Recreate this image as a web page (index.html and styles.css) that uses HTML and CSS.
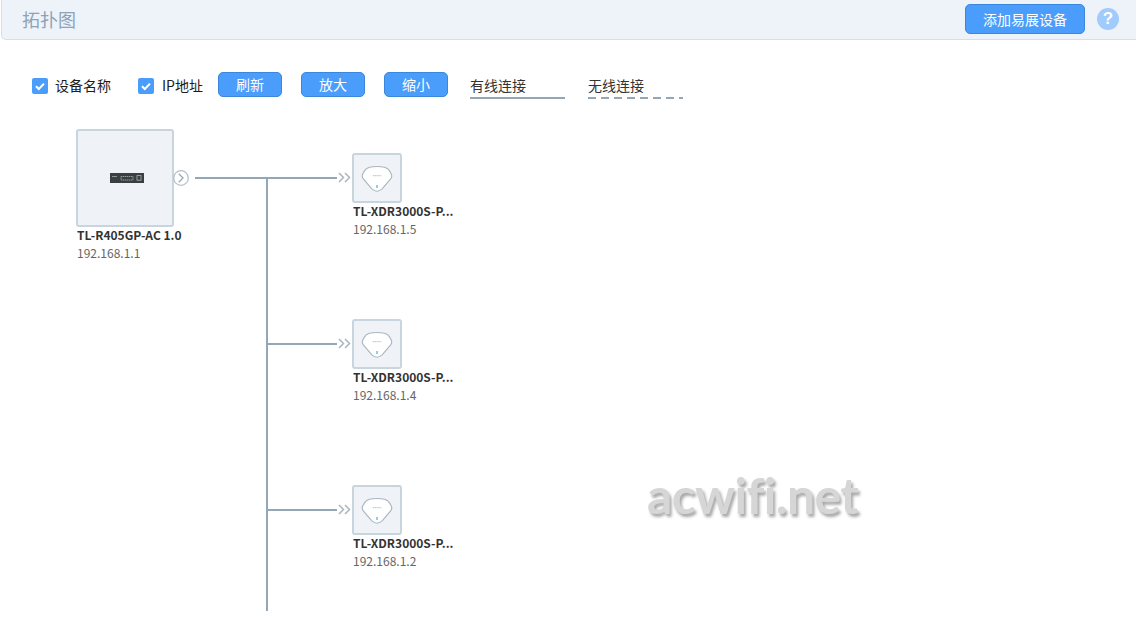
FILE: index.html
```html
<!DOCTYPE html>
<html lang="zh-CN">
<head>
<meta charset="utf-8">
<title>拓扑图</title>
<link rel="stylesheet" href="styles.css">
</head>
<body>
<header class="header">
  <h1 class="title">拓扑图</h1>
  <div class="header-actions">
    <button class="btn btn-add">添加易展设备</button>
    <span class="help">?</span>
  </div>
</header>
<div class="toolbar">
  <label class="check check-name"><span class="box"><svg viewBox="0 0 16 16" class="tick"><path d="M4 8.2l2.8 2.8L12 5.6" fill="none" stroke="#fff" stroke-width="2"/></svg></span>设备名称</label>
  <label class="check check-ip"><span class="box"><svg viewBox="0 0 16 16" class="tick"><path d="M4 8.2l2.8 2.8L12 5.6" fill="none" stroke="#fff" stroke-width="2"/></svg></span>IP地址</label>
  <button class="btn btn-tool">刷新</button>
  <button class="btn btn-tool">放大</button>
  <button class="btn btn-tool">缩小</button>
  <span class="legend legend-wired">有线连接</span>
  <span class="legend legend-wireless">无线连接</span>
</div>
<main class="topology">
  <div class="root">
    <div class="thumb thumb-root">
      <svg class="switch" viewBox="0 0 34 10">
        <rect width="34" height="10" fill="#3a4042"/>
        <rect x="2" y="3" width="5" height="1" fill="#8b9396"/>
        <path d="M11 3.500h12v3.500H11z" fill="none" stroke="#aeb5b8" stroke-width=".8" stroke-dasharray="1.400 .6"/>
        <rect x="27" y="2.600" width="4" height="4.600" fill="none" stroke="#aeb5b8" stroke-width=".8"/>
      </svg>
    </div>
    <div class="name">TL-R405GP-AC 1.0</div>
    <div class="ip">192.168.1.1</div>
  </div>
  <svg class="toggle" viewBox="0 0 16 16"><circle cx="8" cy="8" r="7.300" fill="#fff" stroke="#b4c1cc" stroke-width="1.300"/><path d="M5.800 3.800L10 8l-4.200 4.200" fill="none" stroke="#9aa8b4" stroke-width="1.300"/></svg>
  <div class="stub"></div>
  <div class="trunk"></div>
  <div class="branches">
    <div class="branch">
      <div class="wire"></div>
      <svg class="chev" viewBox="0 0 13 11"><path d="M1 1l4.500 4.500L1 10M7 1l4.500 4.500L7 10" fill="none" stroke="#a9b6c1" stroke-width="1.500"/></svg>
      <div class="node">
        <div class="thumb thumb-ap">
          <svg class="ap" viewBox="0 0 34 28"><path d="M9 2Q17 .5 25 2Q29 3 31 7L32.500 10Q33.200 12 31.500 14.500L22.500 25Q19.500 27.500 17 27.500Q14.500 27.500 11.500 25L2.500 14.500Q.8 12 1.500 10L3 7Q5 3 9 2Z" fill="#fff" stroke="#aab5be" stroke-width="1.200"/><path d="M12.500 11h9" stroke="#a4acb3" stroke-width=".8" stroke-dasharray="1.500 .5"/><path d="M17 21v3" stroke="#7fd0f5" stroke-width="2"/></svg>
        </div>
        <div class="name name-ap">TL-XDR3000S-P...</div>
        <div class="ip">192.168.1.5</div>
      </div>
    </div>
    <div class="branch">
      <div class="wire"></div>
      <svg class="chev" viewBox="0 0 13 11"><path d="M1 1l4.500 4.500L1 10M7 1l4.500 4.500L7 10" fill="none" stroke="#a9b6c1" stroke-width="1.500"/></svg>
      <div class="node">
        <div class="thumb thumb-ap">
          <svg class="ap" viewBox="0 0 34 28"><path d="M9 2Q17 .5 25 2Q29 3 31 7L32.500 10Q33.200 12 31.500 14.500L22.500 25Q19.500 27.500 17 27.500Q14.500 27.500 11.500 25L2.500 14.500Q.8 12 1.500 10L3 7Q5 3 9 2Z" fill="#fff" stroke="#aab5be" stroke-width="1.200"/><path d="M12.500 11h9" stroke="#a4acb3" stroke-width=".8" stroke-dasharray="1.500 .5"/><path d="M17 21v3" stroke="#7fd0f5" stroke-width="2"/></svg>
        </div>
        <div class="name name-ap">TL-XDR3000S-P...</div>
        <div class="ip">192.168.1.4</div>
      </div>
    </div>
    <div class="branch">
      <div class="wire"></div>
      <svg class="chev" viewBox="0 0 13 11"><path d="M1 1l4.500 4.500L1 10M7 1l4.500 4.500L7 10" fill="none" stroke="#a9b6c1" stroke-width="1.500"/></svg>
      <div class="node">
        <div class="thumb thumb-ap">
          <svg class="ap" viewBox="0 0 34 28"><path d="M9 2Q17 .5 25 2Q29 3 31 7L32.500 10Q33.200 12 31.500 14.500L22.500 25Q19.500 27.500 17 27.500Q14.500 27.500 11.500 25L2.500 14.500Q.8 12 1.500 10L3 7Q5 3 9 2Z" fill="#fff" stroke="#aab5be" stroke-width="1.200"/><path d="M12.500 11h9" stroke="#a4acb3" stroke-width=".8" stroke-dasharray="1.500 .5"/><path d="M17 21v3" stroke="#7fd0f5" stroke-width="2"/></svg>
        </div>
        <div class="name name-ap">TL-XDR3000S-P...</div>
        <div class="ip">192.168.1.2</div>
      </div>
    </div>
  </div>
</main>
<div class="watermark">acwifi.net</div>
</body>
</html>
```
FILE: styles.css
```css
* { box-sizing: border-box; }
html, body { margin: 0; height: 628px; overflow: hidden; background: #fff; }
body {
  position: relative;
  font-family: "Noto Sans CJK SC", "Noto Sans", sans-serif;
  color: #222;
}
.header {
  height: 40px;
  margin-left: 1px;
  padding: 4px 17px 0 20px;
  display: flex;
  justify-content: space-between;
  align-items: flex-start;
  background: #eef3fa;
  border-left: 1px solid #d6dfe9;
  border-bottom: 1px solid #d6dfe9;
  border-bottom-left-radius: 5px;
}
.title {
  margin: 0;
  font-size: 18px;
  font-weight: 400;
  line-height: 30px;
  color: #8fa2b6;
}
.header-actions { display: flex; align-items: center; gap: 12px; }
.btn {
  padding: 0;
  font-family: inherit;
  font-size: 14px;
  color: #fff;
  background: #4a9dfb;
  border: 1px solid #3b87dc;
  border-radius: 5px;
}
.btn-add { width: 120px; height: 30px; line-height: 26px; }
.help {
  width: 22px;
  height: 22px;
  margin-top: -1px;
  border-radius: 50%;
  background: #a0cbfc;
  color: #fff;
  font: 700 17px/22px "Liberation Sans", sans-serif;
  text-align: center;
}
.toolbar {
  height: 27px;
  margin-top: 32px;
  padding-left: 32px;
  display: flex;
  align-items: flex-start;
  font-size: 14px;
}
.check {
  display: flex;
  align-items: center;
  height: 26px;
  color: #1c1c1c;
}
.check-name { width: 106px; }
.check-ip { width: 80px; }
.box {
  width: 16px;
  height: 18px;
  margin-right: 7px;
  padding-top: 2px;
}
.check-ip .box { margin-right: 8px; }
.tick { display: block; width: 16px; height: 16px; border-radius: 2px; background: #4a9dfb; }
.btn-tool { width: 64px; height: 25px; margin-right: 19px; line-height: 21px; }
.btn-tool:nth-of-type(3) { margin-right: 22px; }
.legend {
  width: 95px;
  height: 27px;
  line-height: 27px;
  color: #333;
  font-size: 14px;
}
.legend-wired { border-bottom: 2px solid #94a7b6; margin-right: 23px; }
.legend-wireless {
  background: repeating-linear-gradient(to right, #94a7b6 0 8px, transparent 8px 13px) left bottom / 100% 2px no-repeat;
}
.topology { position: relative; height: 530px; margin-top: -1px; }
.root { position: absolute; left: 76px; top: 31px; }
.thumb {
  background: #eff3f7;
  border: 2px solid #c8d4de;
  border-radius: 3px;
  display: flex;
  align-items: center;
  justify-content: center;
}
.thumb-root { width: 98px; height: 98px; margin-bottom: -1px; }
.switch { width: 34px; height: 10px; display: block; margin-left: 3px; }
.name {
  padding-left: 1px;
  font-size: 12px;
  font-weight: 700;
  line-height: 18px;
  color: #333;
  white-space: nowrap;
}
.ip {
  padding-left: 1px;
  font-size: 12px;
  line-height: 18px;
  color: #666;
}
.toggle { position: absolute; left: 173px; top: 72px; width: 16px; height: 16px; }
.stub { position: absolute; left: 195px; top: 79px; width: 72px; height: 2px; background: #94a7b6; }
.trunk { position: absolute; left: 266px; top: 79px; width: 2px; height: 434px; background: #94a7b6; }
.branches {
  position: absolute;
  left: 268px;
  top: 55px;
  display: flex;
  flex-direction: column;
  gap: 70px;
}
.branch { display: flex; align-items: flex-start; height: 96px; }
.wire { width: 69px; height: 2px; margin-top: 24px; background: #94a7b6; }
.chev { width: 13px; height: 11px; margin: 19px 1px 0 1px; display: block; }
.thumb-ap { width: 50px; height: 50px; margin-bottom: -1px; }
.ap { width: 32px; height: 27px; display: block; }
.node { width: 110px; }
.watermark {
  position: absolute;
  left: 647px;
  top: 461px;
  font-family: "Lato", sans-serif;
  font-size: 50px;
  font-weight: 700;
  letter-spacing: -.7px;
  line-height: 68px;
  color: #d6d6d6;
  text-shadow: 2px 3px 3px #a8a8a8;
  filter: blur(.7px);
}
```
